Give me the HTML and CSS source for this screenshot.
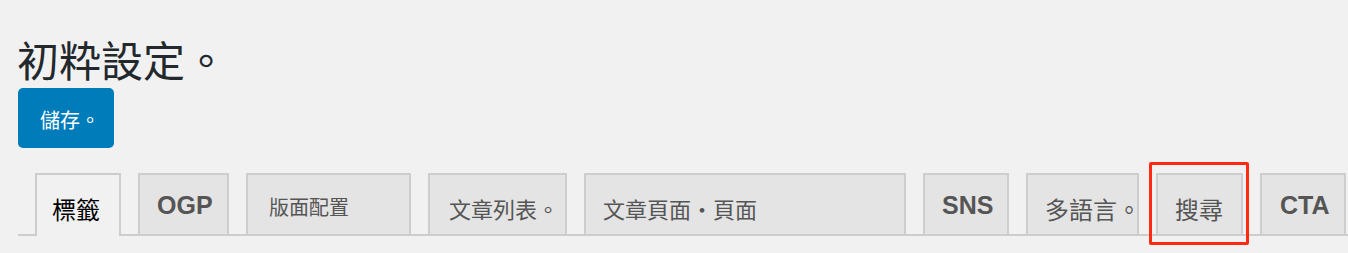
FILE: index.html
```html
<!DOCTYPE html>
<html lang="zh-TW">
<head>
    <meta charset="UTF-8">
    <meta name="viewport" content="width=device-width, initial-scale=1.0">
    <title>初粋設定。</title>
    <link rel="stylesheet" href="styles.css">
</head>
<body>
    <div class="wrap">
        <h1>初粋設定。</h1>
        <button class="save-button">儲存。</button>

        <nav class="nav-tabs">
            <a href="#" class="tab tab-active tab-lg tab-tags">標籤</a>
            <a href="#" class="tab tab-latin tab-ogp">OGP</a>
            <a href="#" class="tab tab-sm tab-layout">版面配置</a>
            <a href="#" class="tab tab-md tab-list">文章列表。</a>
            <a href="#" class="tab tab-md tab-post">文章頁面・頁面</a>
            <a href="#" class="tab tab-latin tab-sns">SNS</a>
            <a href="#" class="tab tab-lg tab-lang">多語言。</a>
            <a href="#" class="tab tab-lg tab-search highlight">搜尋</a>
            <a href="#" class="tab tab-latin tab-cta">CTA</a>
        </nav>
    </div>
</body>
</html>
```

FILE: styles.css
```css
body {
    margin: 0;
    padding: 0 0 0 18px;
    background-color: #f1f1f1;
    font-family: "Noto Sans CJK TC", "Noto Sans", sans-serif;
    color: #23282d;
}
.wrap {
    padding-bottom: 17px;
}
h1 {
    font-size: 42px;
    font-weight: 400;
    line-height: 50px;
    margin: 34px 0 4px -1px;
}
.save-button {
    display: block;
    box-sizing: border-box;
    width: 96px;
    height: 60px;
    padding: 3px 0 0 22px;
    text-align: left;
    line-height: 57px;
    font-family: inherit;
    font-size: 20px;
    color: #fff;
    background-color: #007cba;
    border: none;
    border-radius: 5px;
}
.nav-tabs {
    display: flex;
    align-items: flex-end;
    margin-top: 25px;
    border-bottom: 2px solid #cdcdcd;
}
.tab {
    position: relative;
    flex-shrink: 0;
    box-sizing: border-box;
    height: 61px;
    margin-left: 17px;
    padding: 9px 0 0 17px;
    line-height: 49px;
    background-color: #e4e4e4;
    border: 2px solid #cdcdcd;
    border-bottom: none;
    color: #555;
    text-decoration: none;
    white-space: nowrap;
}
.tab-active {
    height: 63px;
    margin-bottom: -2px;
    background-color: #f1f1f1;
    color: #000;
}
.tab-sm { font-size: 20px; padding-top: 7px; }
.tab-md { font-size: 22px; }
.tab-lg { font-size: 24px; }
.tab-latin {
    padding-top: 1px;
    line-height: 58px;
    font-family: "Liberation Sans", Arial, sans-serif;
    font-size: 25px;
    font-weight: 700;
}
.tab-tags { width: 86px; padding-left: 15px; }
.tab-ogp { width: 91px; }
.tab-layout { width: 165px; padding-left: 21px; }
.tab-list { width: 139px; padding-left: 19px; }
.tab-post { width: 322px; }
.tab-sns { width: 86px; }
.tab-lang { width: 113px; }
.tab-search { width: 87px; }
.tab-cta { width: 86px; padding-left: 18px; }
.highlight::after {
    content: "";
    position: absolute;
    top: -13px;
    left: -9px;
    right: -8px;
    bottom: -11px;
    border: 3px solid #ff2a0f;
    border-radius: 2px;
}
```
